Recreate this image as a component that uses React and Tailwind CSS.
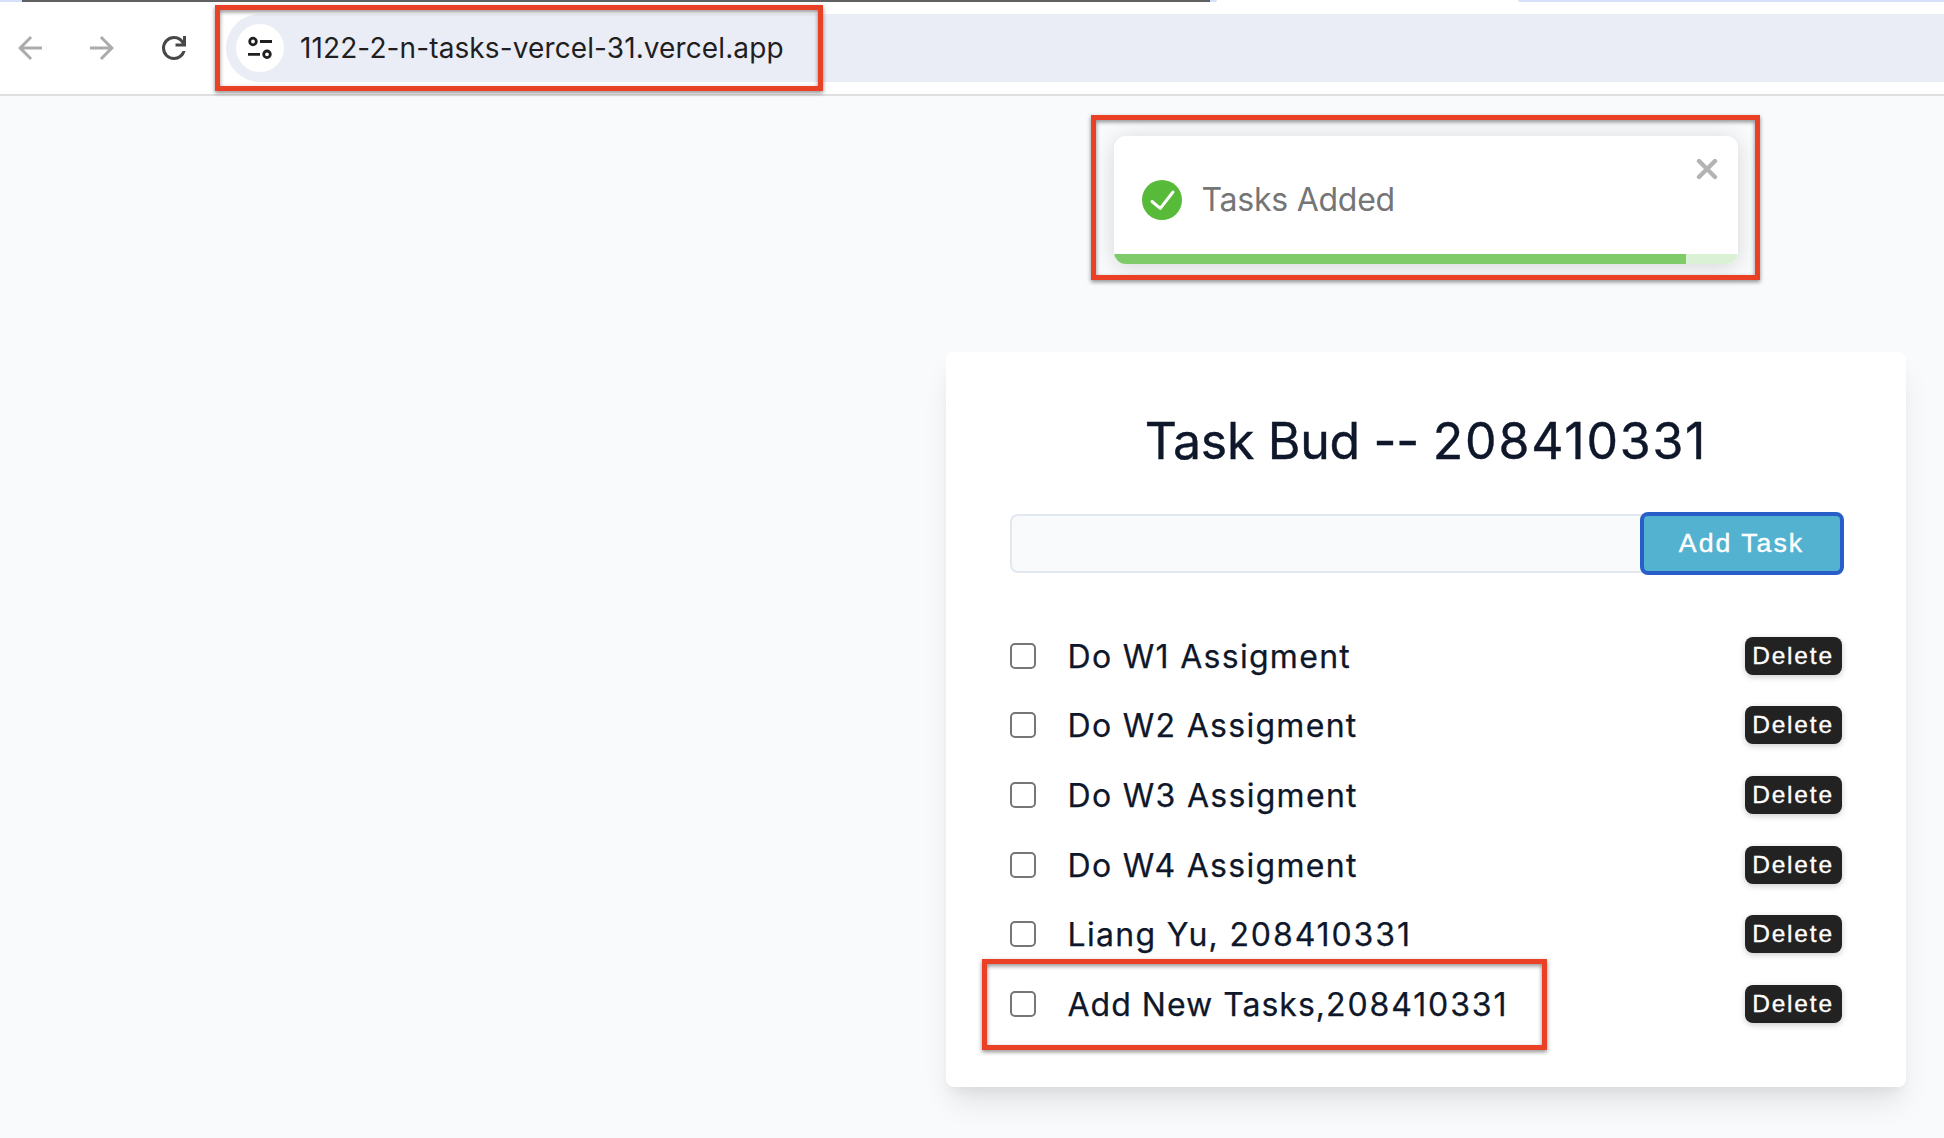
const tasks = [
  { text: "Do W1 Assigment" },
  { text: "Do W2 Assigment" },
  { text: "Do W3 Assigment" },
  { text: "Do W4 Assigment" },
  { text: "Liang Yu, ", number: "208410331" },
  { text: "Add New Tasks,", number: "208410331", tight: true },
];

function NavIcon({ d, className }) {
  return (
    <svg viewBox="0 0 24 24" className={`size-9 shrink-0 ${className}`} fill="currentColor">
      <path d={d} />
    </svg>
  );
}

function Highlight({ className }) {
  return (
    <div
      className={`pointer-events-none absolute border-[5px] border-[#ea4126] drop-shadow-[0_2px_2px_rgba(0,0,0,0.45)] ${className}`}
    />
  );
}

function TabStrip() {
  return (
    <div className="flex h-[2px] bg-white">
      <div className="w-[22px] bg-[#d5e1fb]" />
      <div className="w-[1188px] bg-[#5f6062]" />
      <div className="w-[7px] rounded-br-full bg-[#d5e1fb]" />
      <div className="ml-[301px] flex-1 rounded-bl-full bg-[#d5e1fb]" />
    </div>
  );
}

function Toolbar() {
  return (
    <div className="flex h-[94px] items-center border-b-2 border-[#dfdfdf] bg-white pl-[12px]">
      <NavIcon
        className="text-[#acacac]"
        d="M20 11H7.83l5.59-5.59L12 4l-8 8 8 8 1.41-1.41L7.83 13H20v-2z"
      />
      <NavIcon
        className="ml-[35.5px] text-[#acacac]"
        d="M4 11h12.17l-5.59-5.59L12 4l8 8-8 8-1.41-1.41L16.17 13H4v-2z"
      />
      <NavIcon
        className="ml-[36.5px] text-[#474747]"
        d="M12 20q-3.35 0-5.675-2.325T4 12t2.325-5.675T12 4q1.725 0 3.3.712T18 6.75V4h2v7h-7V9h4.2q-.8-1.4-2.187-2.2T12 6Q9.5 6 7.75 7.75T6 12t1.75 4.25T12 18q1.925 0 3.475-1.1T17.65 14h2.1q-.7 2.65-2.85 4.325T12 20"
      />
      <div className="ml-[34px] flex h-[68px] flex-1 items-center rounded-l-full bg-[#ebedf6] pl-[10px]">
        <div className="grid size-12 place-items-center rounded-full bg-white">
          <svg viewBox="0 0 24 24" className="size-6" fill="none" stroke="#1f1f1f" strokeWidth="2.8">
            <circle cx="5" cy="5.5" r="3.3" />
            <path d="M12 5.5h12M0 18.3h12" />
            <circle cx="19" cy="18.3" r="3.3" />
          </svg>
        </div>
        <span className="ml-[16px] text-[28px] leading-9 tracking-[0.11px] text-[#1f1f1f]">
          1122-2-n-tasks-vercel-31.vercel.app
        </span>
      </div>
    </div>
  );
}

function Toast() {
  return (
    <div className="flex h-[128px] w-[624px] flex-col overflow-hidden rounded-xl bg-white">
      <div className="flex flex-1 pl-7 pr-[20.5px]">
        <div className="flex flex-1 items-center pt-[10px]">
          <svg viewBox="0 0 40 40" className="size-10" fill="none">
            <circle cx="20" cy="20" r="20" fill="#57ba38" />
            <path
              d="M10 21.5 18.3 28.3 31 12"
              stroke="white"
              strokeWidth="3"
              strokeLinecap="round"
              strokeLinejoin="round"
            />
          </svg>
          <span className="ml-[19.5px] text-[32px] leading-10 tracking-[-0.25px] text-[#757575]">
            Tasks Added
          </span>
        </div>
        <svg viewBox="0 0 22 22" className="mt-[21.5px] size-[22px]" stroke="#b3b3b3" strokeWidth="4.4" strokeLinecap="round">
          <path d="m3 3 16 16M19 3 3 19" />
        </svg>
      </div>
      <div className="h-[10px] bg-[#dbf1d5]">
        <div className="h-full w-[572px] bg-[#7fcb69]" />
      </div>
    </div>
  );
}

function TaskRow({ text, number, tight }) {
  return (
    <li className="flex h-[69.67px] items-center">
      <input
        type="checkbox"
        className="size-[26px] appearance-none rounded-[5px] border-2 border-[#767676] bg-white"
      />
      <span className={`ml-[31.5px] flex-1 pt-[2px] text-[32px] leading-10 [-webkit-text-stroke:0.25px_#0f172a] ${tight ? "tracking-[1px]" : "tracking-[1.3px]"}`}>
        {text}
        {number && <span className="tracking-[1.9px]">{number}</span>}
      </span>
      <button className="mr-[0.5px] h-[38px] w-[97px] rounded-lg bg-[#222] font-['Liberation_Sans',sans-serif] text-[24.5px] leading-none tracking-[1.8px] text-white shadow-[0_2px_6px_rgba(0,0,0,0.2)] [-webkit-text-stroke:0.35px_white]">
        Delete
      </button>
    </li>
  );
}

function TaskCard() {
  return (
    <main className="h-[735px] w-[960px] rounded-lg bg-white p-16 text-[#0f172a] shadow-[0_20px_30px_-6px_rgba(0,0,0,0.1),0_8px_12px_-4px_rgba(0,0,0,0.05)]">
      <h1 className="text-center text-[50px] leading-[50px] tracking-[-0.3px] [-webkit-text-stroke:0.4px_#0f172a]">
        Task Bud -- <span className="tracking-[1.8px]">208410331</span>
      </h1>
      <form className="mt-12 flex h-[59px]">
        <input className="w-[632px] rounded-l-lg border-2 border-r-0 border-[#e2e8f0] bg-[#f8fafc]" />
        <button
          type="button"
          className="w-[200px] rounded-md bg-[#52b2d0] pr-px pb-[1px] font-['Liberation_Sans',sans-serif] text-[26.7px] leading-none tracking-[2px] text-white outline-4 -outline-offset-2 outline-[#285ec7] [-webkit-text-stroke:0.4px_white]"
        >
          Add Task
        </button>
      </form>
      <ul className="mt-12">
        {tasks.map((t) => (
          <TaskRow key={t.text} {...t} />
        ))}
      </ul>
    </main>
  );
}

export default function App() {
  return (
    <div className="relative flex h-[1138px] w-[1944px] flex-col overflow-hidden bg-[#f8fafc] font-['Inter',sans-serif]">
      <TabStrip />
      <Toolbar />
      <div className="flex flex-1 flex-col items-end pr-[38px] pt-10">
        <div className="flex w-[960px] justify-center">
          <div className="rounded-xl shadow-[0_2px_20px_rgba(0,0,0,0.1),0_4px_30px_rgba(0,0,0,0.05)]">
            <Toast />
          </div>
        </div>
        <div className="mt-[88px]">
          <TaskCard />
        </div>
      </div>
      <Highlight className="left-[215px] top-[5px] h-[86px] w-[608px]" />
      <Highlight className="left-[1091px] top-[115px] h-[165px] w-[669px]" />
      <Highlight className="left-[982px] top-[959px] h-[91px] w-[565px]" />
    </div>
  );
}
